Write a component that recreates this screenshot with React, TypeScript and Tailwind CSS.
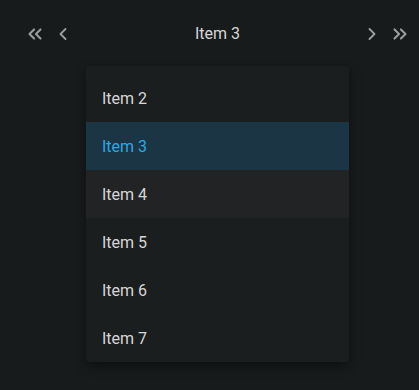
import { ChevronLeft, ChevronRight, ChevronsLeft, ChevronsRight } from "lucide-react";

const items = ["Item 2", "Item 3", "Item 4", "Item 5", "Item 6", "Item 7"];

const App = () => {
    return (
        <div className="w-[419px] h-[390px] bg-[#181b1c] font-['Roboto',sans-serif] overflow-hidden">
            <div className="flex items-center h-[66px] pt-[2px] pl-[24px] pr-[8px]">
                <button className="w-[22px] flex justify-center text-[#9e9e9e]"><ChevronsLeft size={22} strokeWidth={2.2} /></button>
                <button className="w-[22px] ml-[6px] flex justify-center text-[#9e9e9e]"><ChevronLeft size={20} strokeWidth={2.2} /></button>
                <div className="flex-1 text-center text-[16px] text-[#d6d6d6]">Item 3</div>
                <button className="w-[22px] mr-[6px] flex justify-center text-[#9e9e9e]"><ChevronRight size={20} strokeWidth={2.2} /></button>
                <button className="w-[22px] flex justify-center text-[#9e9e9e]"><ChevronsRight size={22} strokeWidth={2.2} /></button>
            </div>
            <div className="ml-[86px] w-[263px] h-[296px] pt-[8px] bg-[#1b1e1f] rounded-[4px] shadow-[0_4px_12px_rgba(0,0,0,0.45)] overflow-hidden">
                <ul>
                    {items.map((item) => (
                        <li
                            key={item}
                            className={
                                item === "Item 3"
                                    ? "h-[48px] flex items-center pl-[16px] pt-[1px] text-[16px] bg-[#1b3544] text-[#29a9e6]"
                                    : item === "Item 4"
                                    ? "h-[48px] flex items-center pl-[16px] pt-[1px] text-[16px] bg-[#222325] text-[#d6d6d6]"
                                    : "h-[48px] flex items-center pl-[16px] pt-[1px] text-[16px] text-[#d6d6d6]"
                            }
                        >
                            {item}
                        </li>
                    ))}
                </ul>
            </div>
        </div>
    );
};

export default App;
